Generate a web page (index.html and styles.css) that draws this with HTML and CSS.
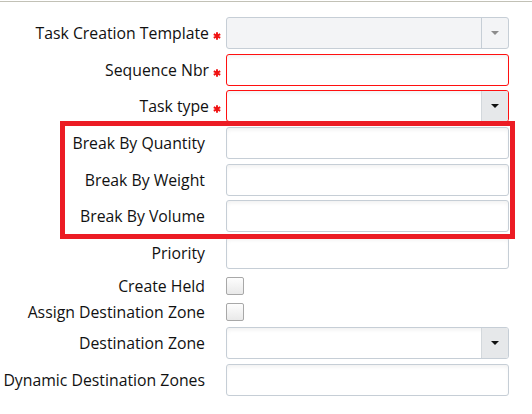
FILE: index.html
```html
<!DOCTYPE html>
<html lang="en">
<head>
<meta charset="utf-8">
<title>Task Template</title>
<link rel="stylesheet" href="styles.css">
</head>
<body>
<div class="topline"></div>
<form class="form">
  <div class="row">
    <label class="lbl req">Task Creation Template<svg class="ast" viewBox="0 0 8 8" width="8" height="8"><path d="M4 0.3V7.7M0.8 2.1L7.2 5.9M7.2 2.1L0.8 5.9" /></svg></label>
    <div class="field select disabled"><span class="val"></span><span class="btn"><i class="arrow"></i></span></div>
  </div>
  <div class="row">
    <label class="lbl req">Sequence Nbr<svg class="ast" viewBox="0 0 8 8" width="8" height="8"><path d="M4 0.3V7.7M0.8 2.1L7.2 5.9M7.2 2.1L0.8 5.9" /></svg></label>
    <div class="field invalid"></div>
  </div>
  <div class="row">
    <label class="lbl req">Task type<svg class="ast" viewBox="0 0 8 8" width="8" height="8"><path d="M4 0.3V7.7M0.8 2.1L7.2 5.9M7.2 2.1L0.8 5.9" /></svg></label>
    <div class="field select invalid"><span class="val"></span><span class="btn"><i class="arrow"></i></span></div>
  </div>
  <div class="row">
    <label class="lbl">Break By Quantity</label>
    <div class="field"></div>
  </div>
  <div class="row">
    <label class="lbl">Break By Weight</label>
    <div class="field"></div>
  </div>
  <div class="row">
    <label class="lbl">Break By Volume</label>
    <div class="field"></div>
  </div>
  <div class="row">
    <label class="lbl">Priority</label>
    <div class="field"></div>
  </div>
  <div class="row check">
    <label class="lbl">Create Held</label>
    <span class="checkbox"></span>
  </div>
  <div class="row check">
    <label class="lbl">Assign Destination Zone</label>
    <span class="checkbox"></span>
  </div>
  <div class="row after-check">
    <label class="lbl">Destination Zone</label>
    <div class="field select"><span class="val"></span><span class="btn"><i class="arrow"></i></span></div>
  </div>
  <div class="row">
    <label class="lbl">Dynamic Destination Zones</label>
    <div class="field"></div>
  </div>
</form>
<div class="highlight"></div>
</body>
</html>
```

FILE: styles.css
```css
html, body {
  margin: 0;
  padding: 0;
  background: #ffffff;
}

body {
  position: relative;
  width: 532px;
  height: 414px;
  overflow: hidden;
  font-family: "Open Sans", "Noto Sans", sans-serif;
  font-size: 15.8px;
  color: #111111;
}

.topline {
  margin-top: 1px;
  height: 1px;
  background: #c2c1b6;
}

.form {
  display: flex;
  flex-direction: column;
  gap: 4.667px;
  padding-top: 15px;
}

.row {
  display: flex;
  align-items: center;
  height: 32px;
}

.row.check {
  height: 18px;
  margin-top: 3.333px;
}

.row.after-check {
  margin-top: 1.333px;
}

.lbl {
  width: 226px;
  flex: none;
  box-sizing: border-box;
  padding-right: 21px;
  text-align: right;
  white-space: nowrap;
}

.lbl.req {
  padding-right: 5px;
}

.ast {
  display: inline-block;
  margin-left: 4px;
  vertical-align: -1px;
  stroke: #f01010;
  stroke-width: 1.9;
  fill: none;
}

.field {
  width: 283px;
  height: 32px;
  flex: none;
  box-sizing: border-box;
  border: 1px solid #c6ced6;
  border-radius: 3px;
  background: #ffffff;
  box-shadow: inset 0 3px 4px -1px rgba(0, 0, 0, 0.06);
  display: flex;
  overflow: hidden;
}

.field.invalid {
  border-color: #ff1010;
}

.field.disabled {
  background: #f3f4f6;
  box-shadow: none;
}

.val {
  flex: 1;
}

.btn {
  width: 26px;
  flex: none;
  display: flex;
  align-items: center;
  justify-content: center;
  background: #e6e8ea;
  border-left: 1px solid #d3d8dc;
}

.field.disabled .btn {
  background: transparent;
  border-left-color: #c6ced6;
}

.arrow {
  width: 0;
  height: 0;
  border-left: 4px solid transparent;
  border-right: 4px solid transparent;
  border-top: 4px solid #111111;
}

.field.disabled .arrow {
  border-top-color: #8c8c8c;
}

.checkbox {
  width: 18px;
  height: 18px;
  box-sizing: border-box;
  border: 1px solid #a8a8a8;
  border-radius: 2px;
  background: linear-gradient(#fdfdfd, #e9e9e9);
}

.highlight {
  position: absolute;
  left: 60px;
  top: 121px;
  width: 455px;
  height: 118px;
  box-sizing: border-box;
  border: 5px solid #ec1c24;
  pointer-events: none;
}
```
